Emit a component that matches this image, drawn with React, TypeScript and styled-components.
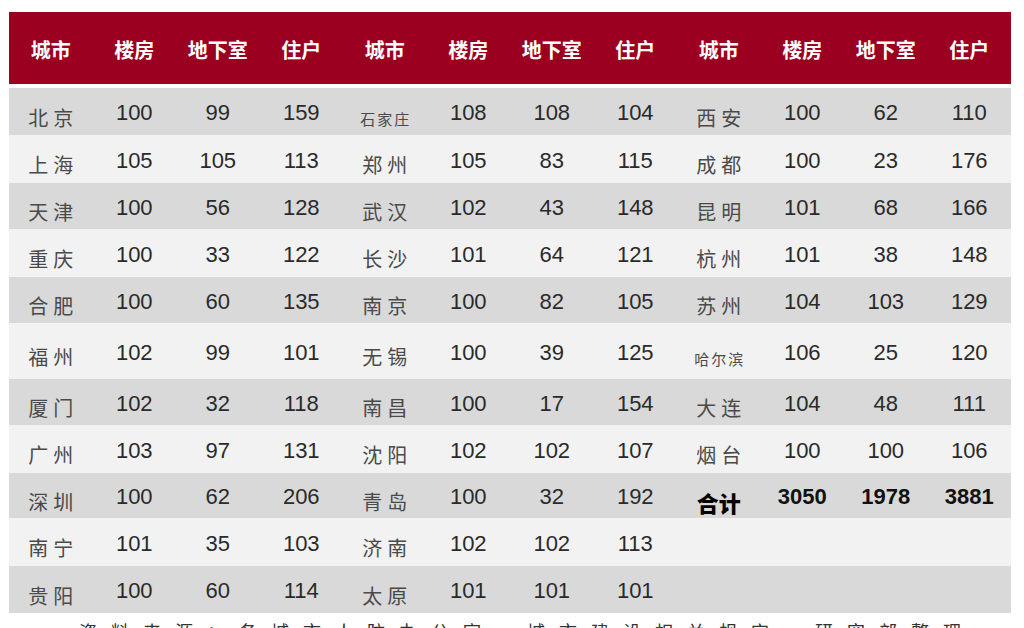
import React from "react";
import styled, { createGlobalStyle } from "styled-components";

const GlobalStyle = createGlobalStyle`
    html, body {
        margin: 0;
        padding: 0;
        background: #ffffff;
        overflow: hidden;
    }
`;

type Entry = [string, string, string, string];

const groupA: Entry[] = [
    ["北京", "100", "99", "159"],
    ["上海", "105", "105", "113"],
    ["天津", "100", "56", "128"],
    ["重庆", "100", "33", "122"],
    ["合肥", "100", "60", "135"],
    ["福州", "102", "99", "101"],
    ["厦门", "102", "32", "118"],
    ["广州", "103", "97", "131"],
    ["深圳", "100", "62", "206"],
    ["南宁", "101", "35", "103"],
    ["贵阳", "100", "60", "114"],
];

const groupB: Entry[] = [
    ["石家庄", "108", "108", "104"],
    ["郑州", "105", "83", "115"],
    ["武汉", "102", "43", "148"],
    ["长沙", "101", "64", "121"],
    ["南京", "100", "82", "105"],
    ["无锡", "100", "39", "125"],
    ["南昌", "100", "17", "154"],
    ["沈阳", "102", "102", "107"],
    ["青岛", "100", "32", "192"],
    ["济南", "102", "102", "113"],
    ["太原", "101", "101", "101"],
];

const groupC: (Entry | null)[] = [
    ["西安", "100", "62", "110"],
    ["成都", "100", "23", "176"],
    ["昆明", "101", "68", "166"],
    ["杭州", "101", "38", "148"],
    ["苏州", "104", "103", "129"],
    ["哈尔滨", "106", "25", "120"],
    ["大连", "104", "48", "111"],
    ["烟台", "100", "100", "106"],
    ["合计", "3050", "1978", "3881"],
    null,
    null,
];

const rowHeights = [47, 48, 46, 48, 46, 56, 46, 48, 45, 48, 47];
const headers = ["城市", "楼房", "地下室", "住户"];

export default function App() {
    const renderGroup = (entry: Entry | null, bold: boolean, key: string) => {
        if (!entry) {
            return [0, 1, 2, 3].map((i) => <NumCell key={key + i} />);
        }
        const [city, ...nums] = entry;
        return [
            <CityCell key={key + "c"} $small={city.length > 2} $bold={bold}>
                {city}
            </CityCell>,
            ...nums.map((n, i) => (
                <NumCell key={key + i} $bold={bold}>
                    {n}
                </NumCell>
            )),
        ];
    };

    return (
        <Page>
            <GlobalStyle />
            <Table>
                <HeaderRow>
                    {[0, 1, 2].flatMap((g) =>
                        headers.map((h) => <HeadCell key={g + h}>{h}</HeadCell>)
                    )}
                </HeaderRow>
                <Body>
                    {rowHeights.map((h, r) => (
                        <BodyRow key={r} $shade={r % 2 === 0} style={{ height: h }}>
                            {renderGroup(groupA[r], false, "a" + r)}
                            {renderGroup(groupB[r], false, "b" + r)}
                            {renderGroup(groupC[r], r === 8, "c" + r)}
                        </BodyRow>
                    ))}
                </Body>
            </Table>
            <Caption>资料来源：各城市人防办公室，城市建设相关规定，研究部整理</Caption>
        </Page>
    );
}

const Page = styled.div`
    width: 1002px;
    padding: 12px 13px 0 9px;
`;

const Table = styled.div`
    display: flex;
    flex-direction: column;
`;

const HeaderRow = styled.div`
    height: 72px;
    background: #9b0020;
    display: grid;
    grid-template-columns: repeat(12, 1fr);
    align-items: center;
`;

const HeadCell = styled.div`
    text-align: center;
    color: #ffffff;
    font-family: "Noto Sans CJK SC", sans-serif;
    font-weight: 700;
    font-size: 20px;
    line-height: 1;
    padding-top: 3px;
`;

const Body = styled.div`
    margin-top: 4px;
    display: flex;
    flex-direction: column;
`;

const BodyRow = styled.div<{ $shade: boolean }>`
    display: grid;
    grid-template-columns: repeat(12, 1fr);
    align-items: center;
    background: ${(p) => (p.$shade ? "#d9d9d9" : "#f2f2f2")};
`;

const NumCell = styled.div<{ $bold?: boolean }>`
    text-align: center;
    font-family: "Liberation Sans", Arial, sans-serif;
    font-size: 22px;
    line-height: 1;
    color: ${(p) => (p.$bold ? "#111111" : "#2a2a2a")};
    font-weight: ${(p) => (p.$bold ? 700 : 400)};
    padding-top: 3px;
`;

const CityCell = styled.div<{ $small: boolean; $bold: boolean }>`
    text-align: center;
    font-family: "Noto Sans CJK SC", sans-serif;
    font-size: ${(p) => (p.$bold ? "22px" : p.$small ? "15px" : "20px")};
    letter-spacing: ${(p) => (p.$bold ? "0" : p.$small ? "2px" : "5px")};
    text-indent: ${(p) => (p.$bold ? "0" : p.$small ? "2px" : "5px")};
    font-weight: ${(p) => (p.$bold ? 900 : 400)};
    color: ${(p) => (p.$bold ? "#000000" : "#4a4a4a")};
    line-height: 1;
    padding-top: ${(p) => (p.$small ? "14px" : "12px")};
`;

const Caption = styled.div`
    margin-top: 9px;
    padding-left: 70px;
    font-family: "Noto Sans CJK SC", sans-serif;
    font-size: 18px;
    letter-spacing: 14px;
    color: #333333;
    line-height: 1;
    white-space: nowrap;
`;
